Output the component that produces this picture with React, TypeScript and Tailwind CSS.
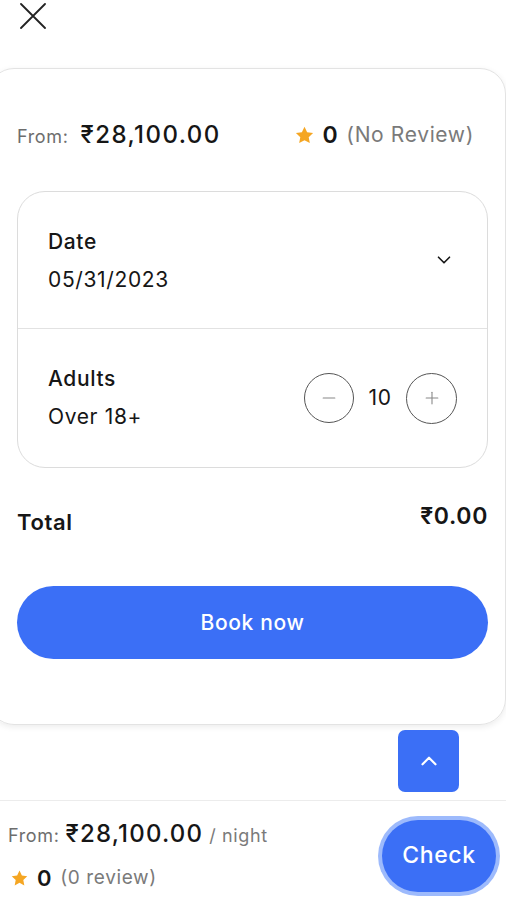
import { ChevronDown, ChevronUp, Minus, Plus } from 'lucide-react';

function Star({ size = 18 }: { size?: number }) {
  return (
    <svg width={size} height={size} viewBox="0 0 24 24" fill="#f5a623">
      <path d="M12 2l3 6.3 6.8.8-5 4.8 1.3 6.8L12 17.4l-6.1 3.3 1.3-6.8-5-4.8 6.8-.8z" />
    </svg>
  );
}

export default function App() {
  return (
    <div
      className="w-[506px] h-[900px] overflow-hidden bg-white text-[#161616] flex flex-col tracking-[0.04em]"
      style={{ fontFamily: 'Inter, "Noto Sans", sans-serif' }}
    >
      <div className="h-[68px] pl-[20px] pt-[3px]">
        <svg width="26" height="26" viewBox="0 0 26 26" stroke="#222" strokeWidth="1.8" strokeLinecap="round">
          <path d="M1 1L25 25M25 1L1 25" />
        </svg>
      </div>

      <div className="-ml-3 h-[657px] rounded-[26px] border border-[#e3e3e3] shadow-[0_2px_6px_rgba(0,0,0,0.08)] pl-[28px] pr-[17px] flex flex-col">
        <div className="h-[122px] flex items-center justify-between pt-[10px]">
          <div className="flex items-baseline gap-[12px]">
            <span className="text-[18px] text-[#6d6d6d]">From:</span>
            <span className="text-[24px] font-medium tracking-[0.06em]">₹28,100.00</span>
          </div>
          <div className="flex items-center gap-[8px] pr-[14px]">
            <Star size={21} />
            <span className="text-[23px] font-semibold">0</span>
            <span className="text-[21px] text-[#7a7a7a]">(No Review)</span>
          </div>
        </div>

        <div className="rounded-[28px] border border-[#dcdcdc] flex flex-col">
          <div className="h-[137px] flex items-center justify-between pl-[30px] pr-[32px] border-b border-[#e2e2e2]">
            <div className="flex flex-col gap-[10px] pt-[2px]">
              <span className="text-[21px] font-medium leading-[28px]">Date</span>
              <span className="text-[21px] leading-[28px]">05/31/2023</span>
            </div>
            <ChevronDown size={22} strokeWidth={1.8} />
          </div>
          <div className="h-[138px] flex items-center justify-between pl-[30px] pr-[30px]">
            <div className="flex flex-col gap-[10px]">
              <span className="text-[21px] font-medium leading-[28px]">Adults</span>
              <span className="text-[21px] leading-[28px]">Over 18+</span>
            </div>
            <div className="flex items-center gap-[13px]">
              <div className="w-[50px] h-[50px] rounded-full border border-[#555] flex items-center justify-center">
                <Minus size={20} strokeWidth={1.3} className="text-[#888]" />
              </div>
              <span className="text-[21px] w-[26px] text-center">10</span>
              <div className="w-[51px] h-[51px] rounded-full border border-[#555] flex items-center justify-center">
                <Plus size={20} strokeWidth={1.3} className="text-[#888]" />
              </div>
            </div>
          </div>
        </div>

        <div className="h-[118px] flex justify-between items-center">
          <span className="text-[22px] font-semibold -mt-[10px]">Total</span>
          <span className="text-[23px] font-semibold -mt-[22px]">₹0.00</span>
        </div>

        <button className="h-[73px] rounded-full bg-[#3b6ff6] text-white text-[21px] font-medium">
          Book now
        </button>
      </div>

      <div className="h-[75px] flex justify-end pr-[47px] pt-[5px]">
        <div className="w-[61px] h-[62px] rounded-[7px] bg-[#3b6ff6] flex items-center justify-center">
          <ChevronUp size={26} strokeWidth={2} className="text-white" />
        </div>
      </div>

      <div className="flex-1 border-t border-[#ececec] flex items-center justify-between pl-[8px] pr-[6px]">
        <div className="flex flex-col gap-[10px] pt-[10px]">
          <div className="flex items-baseline gap-[6px]">
            <span className="text-[18px] text-[#6d6d6d]">From:</span>
            <span className="text-[24px] font-medium tracking-[0.05em]">₹28,100.00</span>
            <span className="text-[18px] text-[#7a7a7a]">/ night</span>
          </div>
          <div className="flex items-center gap-[8px] pl-[2px]">
            <Star size={19} />
            <span className="text-[22px] font-semibold">0</span>
            <span className="text-[19px] text-[#7a7a7a]">(0 review)</span>
          </div>
        </div>
        <div className="rounded-full p-[4px] bg-[#9dbafc] mt-[10px]">
          <button className="w-[114px] h-[72px] rounded-full bg-[#3b6ff6] text-white text-[23px] font-medium">
            Check
          </button>
        </div>
      </div>
    </div>
  );
}
